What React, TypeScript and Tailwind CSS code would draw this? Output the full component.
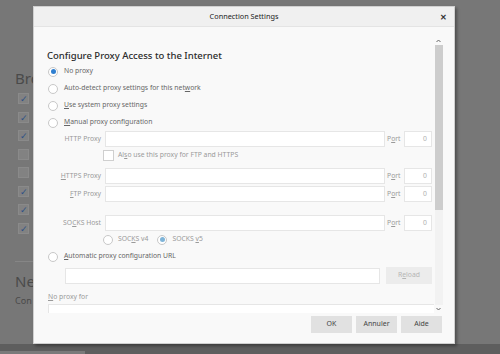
import React from "react";

function Radio({ checked, disabled }: { checked?: boolean; disabled?: boolean }) {
  return (
    <span className="flex h-[10px] w-[10px] shrink-0 items-center justify-center rounded-full border border-[#c8c8c8] bg-white">
      {checked && (
        <span
          className={`h-[5px] w-[5px] rounded-full ${disabled ? "bg-[#7fb4d8]" : "bg-[#2f7fd0]"}`}
        />
      )}
    </span>
  );
}

function Key({ children }: { children: React.ReactNode }) {
  return <span className="underline underline-offset-1">{children}</span>;
}

function ProxyRow({ label, className = "" }: { label: React.ReactNode; className?: string }) {
  return (
    <div className={`flex h-[16px] items-center ${className}`}>
      <span className="w-[55px] pr-[1px] text-right text-[#9a9a9a]">{label}</span>
      <span className="ml-[3px] h-[16px] w-[280px] border border-[#e6e6e6] bg-white" />
      <span className="ml-[2px] w-[15px] text-[#9a9a9a]">
        P<Key>o</Key>rt
      </span>
      <span className="ml-[2px] flex h-[16px] w-[28px] items-center justify-end border border-[#e6e6e6] bg-white pr-[4px] text-[#b0b0b0]">
        0
      </span>
    </div>
  );
}

function Button({ children }: { children: React.ReactNode }) {
  return (
    <span className="flex h-[17px] w-[41px] items-center justify-center bg-[#e1e1e1] text-[7px] text-[#444]">
      {children}
    </span>
  );
}

export default function App() {
  const ticks = [true, true, true, false, false, true, true, true];

  return (
    <div className="relative h-[354px] w-[500px] overflow-hidden bg-[#777777] font-['Noto_Sans',sans-serif]">
      {/* page behind the dialog */}
      <div className="flex flex-col pl-[15px] pt-[68px]">
        <div className="h-[20px] text-[15px] leading-[20px] text-[#4a4a4a]">Bro</div>
        <div className="flex flex-col gap-[7.5px] pl-[3px] pt-[5px]">
          {ticks.map((t, i) => (
            <span
              key={i}
              className="flex h-[11px] w-[11px] items-center justify-center border border-[#8a8a8a] bg-[#828282] text-[9px] leading-none text-[#2d4f86]"
            >
              {t ? "✓" : ""}
            </span>
          ))}
        </div>
        <div className="mt-[27px] h-px w-[30px] bg-[#868686]" />
        <div className="mt-[9px] h-[20px] text-[15px] leading-[20px] text-[#4a4a4a]">Ne</div>
        <div className="mt-[3px] text-[9px] text-[#4a4a4a]">Con</div>
      </div>
      <div className="absolute bottom-0 left-0 h-[10px] w-[500px] bg-[#5e5e5e]">
        <div className="mt-[7px] h-[3px] w-[85px] bg-[#7a7a7a]" />
      </div>

      {/* dialog */}
      <div className="absolute left-[33px] top-[6px] flex h-[338px] w-[422px] flex-col border border-[#d0d0d0] bg-[#f9f9f9] shadow-[2px_2px_3px_rgba(0,0,0,0.35)]">
        <div className="relative flex h-[20px] shrink-0 items-center justify-center border-b border-[#e4e4e4] bg-[#f0f0f0] text-[7.3px] text-[#222]">
          Connection Settings
          <span className="absolute right-[7px] top-[5px] text-[8px] font-bold leading-[10px] text-[#333]">✕</span>
        </div>

        <div className="flex h-[286px] shrink-0 pt-[10px]">
          <div className="h-full flex-1 overflow-hidden pl-[13px] text-[6.8px] text-[#666]">
            <div className="mt-[12px] flex h-[14px] items-center text-[9.5px] font-medium text-[#2b2b2b]">
              Configure Proxy Access to the Internet
            </div>
            <div className="flex h-[17px] items-center gap-[6px] pl-[1px]">
              <Radio checked />
              No proxy
            </div>
            <div className="flex h-[17px] items-center gap-[6px] pl-[1px]">
              <Radio />
              <span>
                Auto-detect proxy settings for this net<Key>w</Key>ork
              </span>
            </div>
            <div className="flex h-[17px] items-center gap-[6px] pl-[1px]">
              <Radio />
              <span>
                <Key>U</Key>se system proxy settings
              </span>
            </div>
            <div className="flex h-[17px] items-center gap-[6px] pl-[1px]">
              <Radio />
              <span>
                <Key>M</Key>anual proxy configuration
              </span>
            </div>

            <ProxyRow label="HTTP Proxy" />
            <div className="flex h-[17px] items-center pl-[56px] text-[#9a9a9a]">
              <span className="h-[11px] w-[11px] border border-[#cfcfcf] bg-white" />
              <span className="ml-[4px]">
                Al<Key>s</Key>o use this proxy for FTP and HTTPS
              </span>
            </div>
            <ProxyRow
              className="mt-[4px]"
              label={
                <>
                  <Key>H</Key>TTPS Proxy
                </>
              }
            />
            <ProxyRow
              className="mt-[2px]"
              label={
                <>
                  <Key>F</Key>TP Proxy
                </>
              }
            />
            <ProxyRow
              className="mt-[13px]"
              label={
                <>
                  SO<Key>C</Key>KS Host
                </>
              }
            />
            <div className="flex h-[17px] items-center pl-[56px] text-[#9a9a9a]">
              <Radio />
              <span className="ml-[5px]">
                SOC<Key>K</Key>S v4
              </span>
              <span className="ml-[9px]">
                <Radio checked disabled />
              </span>
              <span className="ml-[5px]">
                SOCKS <Key>v</Key>5
              </span>
            </div>
            <div className="flex h-[17px] items-center gap-[6px] pl-[1px]">
              <Radio />
              <span>
                <Key>A</Key>utomatic proxy configuration URL
              </span>
            </div>
            <div className="mt-[2px] flex h-[17px] items-center pl-[18px]">
              <span className="h-[16px] w-[315px] border border-[#e6e6e6] bg-white" />
              <span className="ml-[6px] flex h-[17px] w-[46px] items-center justify-center bg-[#ececec] text-[#b5b5b5]">
                R<Key>e</Key>load
              </span>
            </div>
            <div className="mt-[7px] flex h-[12px] items-center pl-[1px] text-[#9a9a9a]">
              <span>
                <Key>N</Key>o proxy for
              </span>
            </div>
            <div className="ml-[1px] mt-[1px] h-[30px] w-[387px] border border-[#e6e6e6] bg-white" />
          </div>

          <div className="mr-[11px] flex w-[9px] shrink-0 flex-col items-center">
            <svg width="7" height="8" viewBox="0 0 7 8" className="shrink-0">
              <path d="M1.5 5 L3.5 3 L5.5 5" fill="none" stroke="#666" strokeWidth="1" />
            </svg>
            <span className="h-[165px] w-[8px] bg-[#cdcdcd]" />
            <span className="w-[8px] flex-1 bg-[#f2f2f2]" />
            <svg width="7" height="8" viewBox="0 0 7 8" className="shrink-0">
              <path d="M1.5 3 L3.5 5 L5.5 3" fill="none" stroke="#666" strokeWidth="1" />
            </svg>
          </div>
        </div>

        <div className="flex flex-1 items-start justify-end gap-[4px] pr-[12px] pt-[3px]">
          <Button>OK</Button>
          <Button>Annuler</Button>
          <Button>Aide</Button>
        </div>
      </div>
    </div>
  );
}
